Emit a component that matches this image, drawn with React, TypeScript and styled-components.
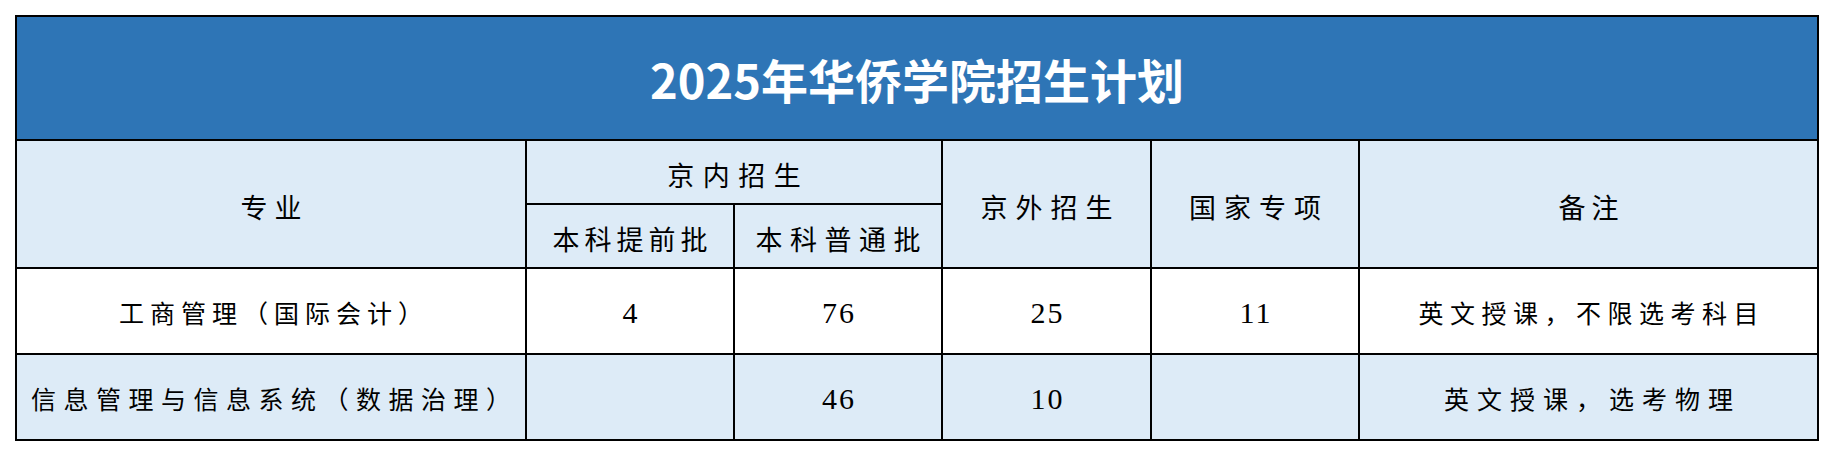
import React from "react";
import styled, { createGlobalStyle } from "styled-components";

const GlobalStyle = createGlobalStyle`
  html, body {
    margin: 0;
    padding: 0;
    background: #ffffff;
  }
`;

const Page = styled.div`
  padding: 15px 0 0 15px;
`;

const PlanTable = styled.table`
  border-collapse: collapse;
  table-layout: fixed;
  width: 1802px;
  font-family: "Liberation Serif", "Noto Sans CJK SC", serif;
  color: #000000;
`;

const TitleCell = styled.th`
  height: 122px;
  padding: 0;
  border: 2px solid #000000;
  background: #2e75b6;
  color: #ffffff;
  font-family: "Noto Sans CJK SC", "Liberation Sans", sans-serif;
  font-weight: 700;
  font-size: 47px;
  text-align: center;
  vertical-align: middle;
  line-height: 1;
`;

const Row = styled.tr<{ $height: number }>`
  height: ${(p) => p.$height}px;
`;

const HeadCell = styled.th<{ $spacing?: number }>`
  padding: 5px 0 0 ${(p) => p.$spacing ?? 8}px;
  border: 2px solid #000000;
  background: #ddebf7;
  font-family: "Noto Sans CJK SC", "Liberation Serif", serif;
  font-weight: 400;
  font-size: 27px;
  letter-spacing: ${(p) => p.$spacing ?? 8}px;
  text-align: center;
  vertical-align: middle;
  line-height: 1;
`;

const DataCell = styled.td<{ $shaded?: boolean; $spacing?: number }>`
  padding: 3px 0 0 ${(p) => p.$spacing ?? 6}px;
  border: 2px solid #000000;
  background: ${(p) => (p.$shaded ? "#ddebf7" : "#ffffff")};
  font-family: "Noto Sans CJK SC", "Liberation Serif", serif;
  font-size: 25px;
  letter-spacing: ${(p) => p.$spacing ?? 6}px;
  text-align: center;
  vertical-align: middle;
  line-height: 1;
`;

const NumberCell = styled(DataCell)`
  font-family: "Liberation Serif", "Times New Roman", serif;
  font-size: 30px;
  letter-spacing: 2px;
  padding-left: 2px;
`;

type Plan = {
  major: string;
  majorSpacing: number;
  early: string;
  regular: string;
  outside: string;
  national: string;
  note: string;
  noteSpacing: number;
};

const plans: Plan[] = [
  {
    major: "工商管理（国际会计）",
    majorSpacing: 6,
    early: "4",
    regular: "76",
    outside: "25",
    national: "11",
    note: "英文授课，不限选考科目",
    noteSpacing: 6.5,
  },
  {
    major: "信息管理与信息系统（数据治理）",
    majorSpacing: 7.5,
    early: "",
    regular: "46",
    outside: "10",
    national: "",
    note: "英文授课，选考物理",
    noteSpacing: 8,
  },
];

export default function App() {
  return (
    <>
      <GlobalStyle />
      <Page>
        <PlanTable>
          <colgroup>
            <col style={{ width: 510 }} />
            <col style={{ width: 208 }} />
            <col style={{ width: 208 }} />
            <col style={{ width: 209 }} />
            <col style={{ width: 208 }} />
            <col style={{ width: 459 }} />
          </colgroup>
          <thead>
            <Row $height={124}>
              <TitleCell colSpan={6}>2025年华侨学院招生计划</TitleCell>
            </Row>
            <Row $height={64}>
              <HeadCell rowSpan={2} $spacing={7}>
                专业
              </HeadCell>
              <HeadCell colSpan={2} $spacing={8.5}>
                京内招生
              </HeadCell>
              <HeadCell rowSpan={2}>京外招生</HeadCell>
              <HeadCell rowSpan={2}>国家专项</HeadCell>
              <HeadCell rowSpan={2} $spacing={6}>
                备注
              </HeadCell>
            </Row>
            <Row $height={64}>
              <HeadCell $spacing={5}>本科提前批</HeadCell>
              <HeadCell $spacing={7.5}>本科普通批</HeadCell>
            </Row>
          </thead>
          <tbody>
            {plans.map((plan, i) => (
              <Row $height={86} key={plan.major}>
                <DataCell $shaded={i % 2 === 1} $spacing={plan.majorSpacing}>
                  {plan.major}
                </DataCell>
                <NumberCell $shaded={i % 2 === 1}>{plan.early}</NumberCell>
                <NumberCell $shaded={i % 2 === 1}>{plan.regular}</NumberCell>
                <NumberCell $shaded={i % 2 === 1}>{plan.outside}</NumberCell>
                <NumberCell $shaded={i % 2 === 1}>{plan.national}</NumberCell>
                <DataCell $shaded={i % 2 === 1} $spacing={plan.noteSpacing}>
                  {plan.note}
                </DataCell>
              </Row>
            ))}
          </tbody>
        </PlanTable>
      </Page>
    </>
  );
}
